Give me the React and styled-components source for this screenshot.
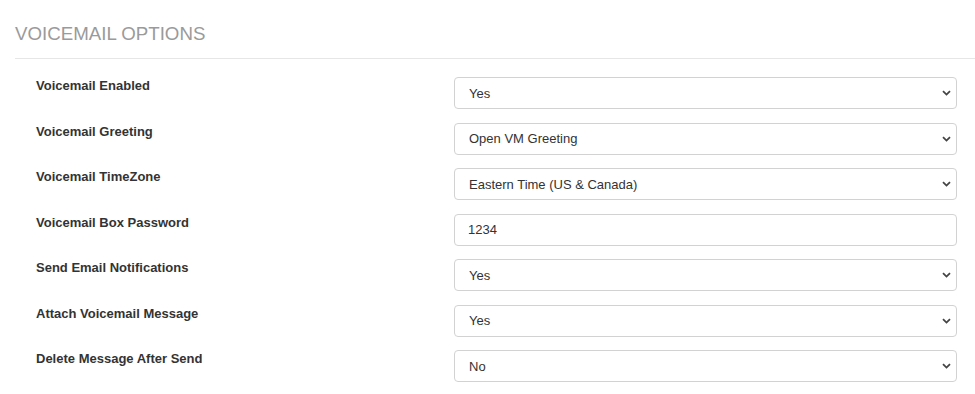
import React from "react";
import styled, { createGlobalStyle } from "styled-components";

const Global = createGlobalStyle`
  html, body { margin: 0; padding: 0; background: #fff; }
  body { font-family: "Liberation Sans", Arial, sans-serif; color: #333; }
  * { box-sizing: border-box; }
`;

const Page = styled.div`
  width: 975px;
  padding-top: 23px;
`;

const Heading = styled.h2`
  margin: 0 0 0 15px;
  padding: 0 0 13.5px;
  font-size: 18.7px;
  line-height: 21px;
  font-weight: 400;
  color: #9a9a9a;
  border-bottom: 1px solid #e6e6e6;
`;

const Form = styled.div`
  display: flex;
  flex-direction: column;
  gap: 13.5px;
  padding: 18.5px 18px 0 36px;
`;

const Row = styled.div`
  display: grid;
  grid-template-columns: 418px 1fr;
  align-items: start;
`;

const Label = styled.label`
  margin-top: 1px;
  font-size: 13px;
  line-height: 15px;
  font-weight: 700;
  color: #333;
`;

const Field = styled.div`
  position: relative;
  height: 32px;
`;

const controlBase = `
  width: 100%;
  height: 32px;
  border: 1px solid #d2d2d2;
  border-radius: 4px;
  background: #fff;
  font-family: "Liberation Sans", Arial, sans-serif;
  font-size: 13px;
  color: #333;
  outline: none;
`;

const Select = styled.select`
  ${controlBase}
  appearance: none;
  -webkit-appearance: none;
  padding: 0 30px 0 14px;
`;

const Input = styled.input`
  ${controlBase}
  padding: 0 13px;
`;

const Chevron = styled.svg`
  position: absolute;
  right: 6px;
  top: 13px;
  width: 9px;
  height: 6px;
  pointer-events: none;
`;

const rows = [
  { label: "Voicemail Enabled", value: "Yes", options: ["Yes", "No"] },
  { label: "Voicemail Greeting", value: "Open VM Greeting", options: ["Open VM Greeting"] },
  { label: "Voicemail TimeZone", value: "Eastern Time (US & Canada)", options: ["Eastern Time (US & Canada)"] },
  { label: "Voicemail Box Password", input: "1234" },
  { label: "Send Email Notifications", value: "Yes", options: ["Yes", "No"] },
  { label: "Attach Voicemail Message", value: "Yes", options: ["Yes", "No"] },
  { label: "Delete Message After Send", value: "No", options: ["Yes", "No"] },
];

export default function App() {
  return (
    <Page>
      <Global />
      <Heading>VOICEMAIL OPTIONS</Heading>
      <Form>
        {rows.map((r) => (
          <Row key={r.label}>
            <Label>{r.label}</Label>
            <Field>
              {r.input ? (
                <Input defaultValue={r.input} />
              ) : (
                <>
                  <Select defaultValue={r.value}>
                    {r.options.map((o) => (
                      <option key={o}>{o}</option>
                    ))}
                  </Select>
                  <Chevron viewBox="0 0 9 6">
                    <path d="M1 1.2 L4.5 4.6 L8 1.2" fill="none" stroke="#444" strokeWidth="1.8" />
                  </Chevron>
                </>
              )}
            </Field>
          </Row>
        ))}
      </Form>
    </Page>
  );
}
